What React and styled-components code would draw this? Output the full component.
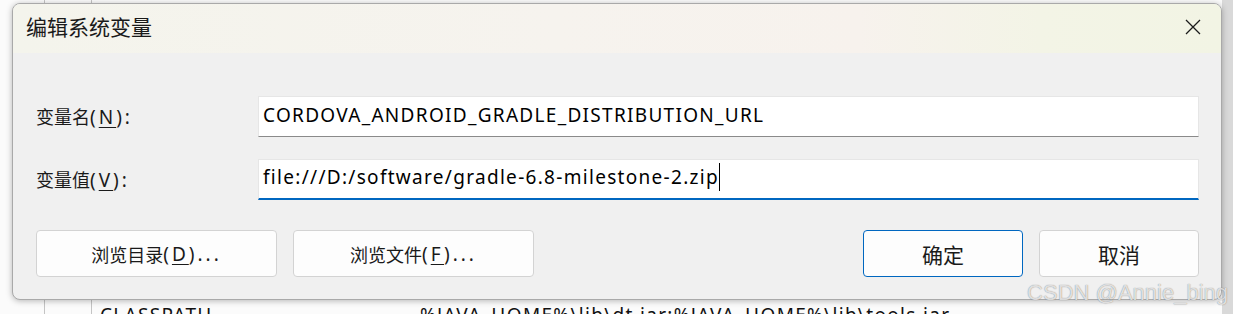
import { createGlobalStyle, styled } from "styled-components";

const GlobalStyle = createGlobalStyle`
    html, body {
        margin: 0;
        padding: 0;
        background: #f0f0f0;
    }
    body {
        font-family: "Noto Sans", "Noto Sans CJK SC", sans-serif;
    }
`;

export default function App() {
    return (
        <>
            <GlobalStyle />
            <Desktop>
                <Dialog>
                    <TitleBar>
                        <Title>编辑系统变量</Title>
                        <CloseButton aria-label="关闭">
                            <svg width="16" height="16" viewBox="0 0 16 16">
                                <path
                                    d="M1 1 L15 15 M15 1 L1 15"
                                    stroke="#1b1b1b"
                                    strokeWidth="1.3"
                                    fill="none"
                                />
                            </svg>
                        </CloseButton>
                    </TitleBar>
                    <Body>
                        <FieldRow>
                            <Label>
                                变量名<Latin>(<u>N</u>):</Latin>
                            </Label>
                            <TextBox>
                                <Value>CORDOVA_ANDROID_GRADLE_DISTRIBUTION_URL</Value>
                            </TextBox>
                        </FieldRow>
                        <FieldRow>
                            <Label>
                                变量值<Latin>(<u>V</u>):</Latin>
                            </Label>
                            <TextBox $focused>
                                <Value>file:///D:/software/gradle-6.8-milestone-2.zip</Value>
                                <Caret />
                            </TextBox>
                        </FieldRow>
                        <ButtonRow>
                            <ButtonGroup>
                                <Button $wide>
                                    浏览目录<Latin>(<u>D</u>)...</Latin>
                                </Button>
                                <Button $wide>
                                    浏览文件<Latin>(<u>F</u>)...</Latin>
                                </Button>
                            </ButtonGroup>
                            <ButtonGroup>
                                <Button $primary>确定</Button>
                                <Button>取消</Button>
                            </ButtonGroup>
                        </ButtonRow>
                    </Body>
                </Dialog>
                <BackRow>
                    <BackName>CLASSPATH</BackName>
                    <BackValue>%JAVA_HOME%\lib\dt.jar;%JAVA_HOME%\lib\tools.jar</BackValue>
                </BackRow>
                <Watermark>CSDN @Annie_bing</Watermark>
            </Desktop>
        </>
    );
}

const Desktop = styled.div`
    position: relative;
    width: 1233px;
    height: 314px;
    overflow: hidden;
    display: flex;
    flex-direction: column;
    background:
        linear-gradient(90deg, transparent 44px, #c4c4c4 44px, #c4c4c4 45px, transparent 45px),
        linear-gradient(90deg, transparent 91px, #c4c4c4 91px, #c4c4c4 92px, transparent 92px),
        linear-gradient(90deg, #fbfbfb 0, #fbfbfb 1222px, #d9d9d9 1222px);
`;

const Dialog = styled.div`
    position: relative;
    z-index: 1;
    margin: 3px 11px 0 12px;
    height: 299px;
    box-sizing: border-box;
    border: 1px solid #a9a9a9;
    border-radius: 8px;
    background: #f0f0f0;
    box-shadow: 0 1px 6px rgba(0, 0, 0, 0.28);
    display: flex;
    flex-direction: column;
    overflow: hidden;
`;

const TitleBar = styled.div`
    height: 49px;
    flex-shrink: 0;
    display: flex;
    align-items: center;
    justify-content: space-between;
    padding: 0 20px 0 13px;
    background: linear-gradient(
        90deg,
        #f4f4ec 0%,
        #f6f3ee 45%,
        #f7f2ed 70%,
        #f3f4e6 85%,
        #f2f4e4 100%
    );
`;

const Title = styled.div`
    font-family: "Noto Sans CJK SC", sans-serif;
    font-size: 21px;
    color: #1a1a1a;
    margin-top: -5px;
`;

const CloseButton = styled.div`
    width: 16px;
    height: 16px;
    display: flex;
    margin-top: -3px;
`;

const Body = styled.div`
    flex: 1;
    display: flex;
    flex-direction: column;
    padding: 43px 22px 0 22px;
`;

const FieldRow = styled.div`
    display: flex;
    align-items: center;
    height: 41px;
    margin-bottom: 22px;
`;

const Latin = styled.span`
    font-size: 19px;
    letter-spacing: 3px;
`;

const Label = styled.div`
    width: 222px;
    flex-shrink: 0;
    font-size: 18px;
    color: #1a1a1a;
    padding-left: 1px;
    u {
        text-underline-offset: 3px;
    }
`;

const TextBox = styled.div`
    flex: 1;
    height: 41px;
    box-sizing: border-box;
    display: flex;
    align-items: center;
    padding: 0 0 4px 4px;
    background: #fff;
    border: 1px solid #e6e6e6;
    border-bottom: ${(p) => (p.$focused ? "2px solid #0067c0" : "1px solid #8a8a8a")};
`;

const Value = styled.span`
    font-size: 19px;
    letter-spacing: 1.3px;
    color: #000;
    white-space: nowrap;
`;

const Caret = styled.span`
    width: 1px;
    height: 28px;
    background: #000;
`;

const ButtonRow = styled.div`
    display: flex;
    justify-content: space-between;
    margin-top: 8px;
    padding-left: 1px;
`;

const ButtonGroup = styled.div`
    display: flex;
    gap: 16px;
`;

const Button = styled.div`
    width: ${(p) => (p.$wide ? "241px" : "160px")};
    height: 47px;
    box-sizing: border-box;
    display: flex;
    align-items: center;
    justify-content: center;
    background: #fdfdfd;
    border: 1px solid ${(p) => (p.$primary ? "#0067c0" : "#d3d3d3")};
    border-radius: 4px;
    font-size: ${(p) => (p.$wide ? "18px" : "21px")};
    color: #1a1a1a;
    u {
        text-underline-offset: 3px;
    }
`;

const BackRow = styled.div`
    display: flex;
    height: 12px;
    margin-top: 2px;
    padding-left: 100px;
    font-size: 19px;
    letter-spacing: 1.3px;
    line-height: 1;
    color: #111;
    overflow: hidden;
    align-items: flex-start;
`;

const BackName = styled.span`
    width: 320px;
    padding-top: 4px;
`;

const BackValue = styled.span`
    padding-top: 4px;
`;

const Watermark = styled.div`
    position: absolute;
    z-index: 2;
    right: 5px;
    bottom: 8px;
    font-family: "Liberation Sans", sans-serif;
    font-size: 22px;
    color: rgba(250, 250, 250, 0.8);
    text-shadow: 0 0 1px rgba(80, 80, 80, 0.8);
    white-space: nowrap;
`;
